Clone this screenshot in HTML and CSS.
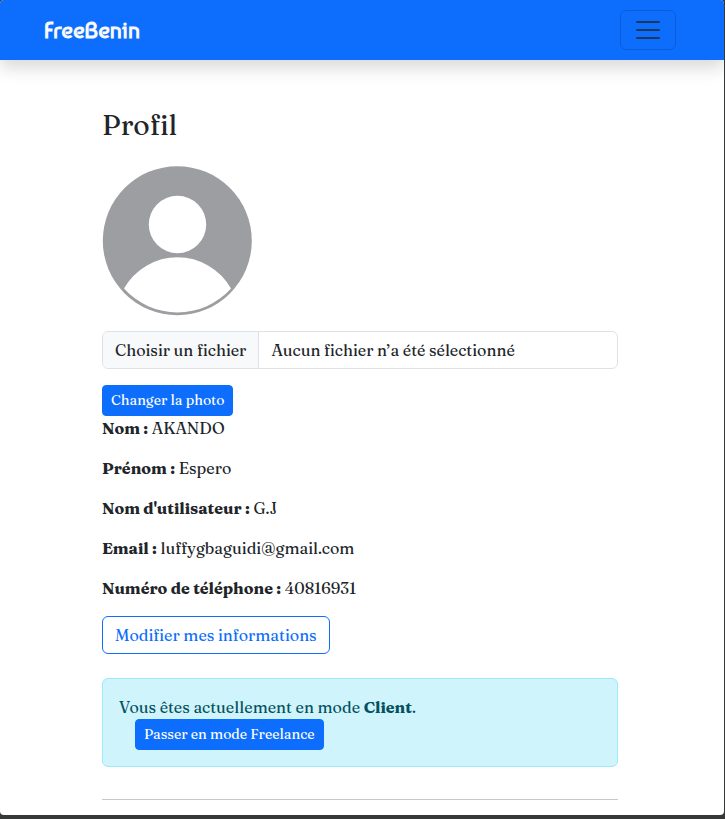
FILE: index.html
```html
<!DOCTYPE html>
<html lang="fr">
<head>
  <meta charset="utf-8">
  <meta name="viewport" content="width=device-width, initial-scale=1">
  <title>Profil - FreeBenin</title>
  <link rel="stylesheet" href="styles.css">
</head>
<body>
  <div class="page">
    <header class="navbar">
      <a class="brand" href="#">FreeBenin</a>
      <button class="toggler" type="button" aria-label="Menu">
        <svg viewBox="0 0 30 30" width="30" height="30" aria-hidden="true">
          <path d="M4 7h22M4 15h22M4 23h22" fill="none" stroke="#212529" stroke-opacity=".75" stroke-width="2" stroke-miterlimit="10" stroke-linecap="round"/>
        </svg>
      </button>
    </header>
    <main class="container">
      <h1 class="title">Profil</h1>
      <svg class="avatar" viewBox="0 0 150 150" role="img" aria-label="Photo de profil">
        <circle cx="75.300" cy="74.700" r="74.500" fill="#9d9ea2"/>
        <circle cx="75.500" cy="58.500" r="28.700" fill="#fff"/>
        <path d="M22 122.500A61.500 61.500 0 0 1 129 122.500A71.800 71.800 0 0 1 22 122.500Z" fill="#fff"/>
      </svg>
      <form>
        <label class="file">
          <input class="file-input" type="file">
          <span class="file-button">Choisir un fichier</span>
          <span class="file-name">Aucun fichier n’a été sélectionné</span>
        </label>
        <button class="btn btn-small" type="submit">Changer la photo</button>
      </form>
      <p><strong>Nom :</strong> AKANDO</p>
      <p><strong>Prénom :</strong> Espero</p>
      <p><strong>Nom d'utilisateur :</strong> G.J</p>
      <p><strong>Email :</strong> luffygbaguidi@gmail.com</p>
      <p><strong>Numéro de téléphone :</strong> 40816931</p>
      <a class="btn btn-outline" href="#">Modifier mes informations</a>
      <section class="alert">
        <div>Vous êtes actuellement en mode <strong>Client</strong>.</div>
        <button class="btn btn-small btn-mode" type="button">Passer en mode Freelance</button>
      </section>
      <hr>
    </main>
  </div>
</body>
</html>
```
FILE: styles.css
```css
* {
  box-sizing: border-box;
}

body {
  margin: 0;
  min-height: 100vh;
  display: flex;
  background: #373838;
  color: #212529;
  font-family: Fraunces, "Liberation Serif", serif;
  font-size: 16px;
  line-height: 24px;
}

.page {
  flex: 1;
  margin: 0 1px 4px 0;
  background: #fff;
  border-radius: 4px;
  overflow: hidden;
}

.navbar {
  display: flex;
  align-items: center;
  justify-content: space-between;
  height: 60px;
  padding: 0 48px 0 44px;
  background: #0d6efd;
  box-shadow: 0 8px 16px rgba(0, 0, 0, .15);
}

.brand {
  color: #f8f9fa;
  font-family: Baumans, "Open Sans", sans-serif;
  font-size: 23px;
  font-weight: 700;
  text-decoration: none;
}

.toggler {
  display: flex;
  align-items: center;
  justify-content: center;
  width: 56px;
  height: 40px;
  padding: 0;
  background: transparent;
  border: 1px solid rgba(0, 0, 0, .15);
  border-radius: 6px;
}

.container {
  max-width: 544px;
  margin: 0 auto;
  padding: 48px 16px 0 12px;
}

.title {
  margin: 0 0 24px;
  font-size: 28px;
  font-weight: 500;
  line-height: 34px;
}

.avatar {
  display: block;
  width: 150px;
  height: 150px;
  margin-bottom: 15px;
}

.file {
  position: relative;
  display: flex;
  height: 38px;
  margin-bottom: 16px;
  border: 1px solid #dee2e6;
  border-radius: 6px;
  overflow: hidden;
}

.file-input {
  position: absolute;
  inset: 0;
  width: 100%;
  opacity: 0;
}

.file-button,
.file-name {
  padding: 6px 12px;
}

.file-button {
  background: #f8f9fa;
  border-right: 1px solid #dee2e6;
}

.btn {
  display: block;
  width: fit-content;
  padding: 6px 12px;
  border: 1px solid #0d6efd;
  border-radius: 6px;
  background: #0d6efd;
  color: #fff;
  font: inherit;
  text-decoration: none;
}

.btn-small {
  padding: 4px 8px;
  border-radius: 4px;
  font-size: 14px;
  line-height: 21px;
}

.btn-outline {
  background: transparent;
  color: #0d6efd;
}

p {
  margin: 0 0 16px;
}

.alert {
  margin: 24px 0 32px;
  padding: 16px;
  background: #cff4fc;
  border: 1px solid #9eeaf9;
  border-radius: 6px;
  color: #055160;
}

.btn-mode {
  margin-left: 16px;
}

hr {
  margin: 0;
  border: 0;
  border-top: 1px solid #c7c8c9;
}
```
